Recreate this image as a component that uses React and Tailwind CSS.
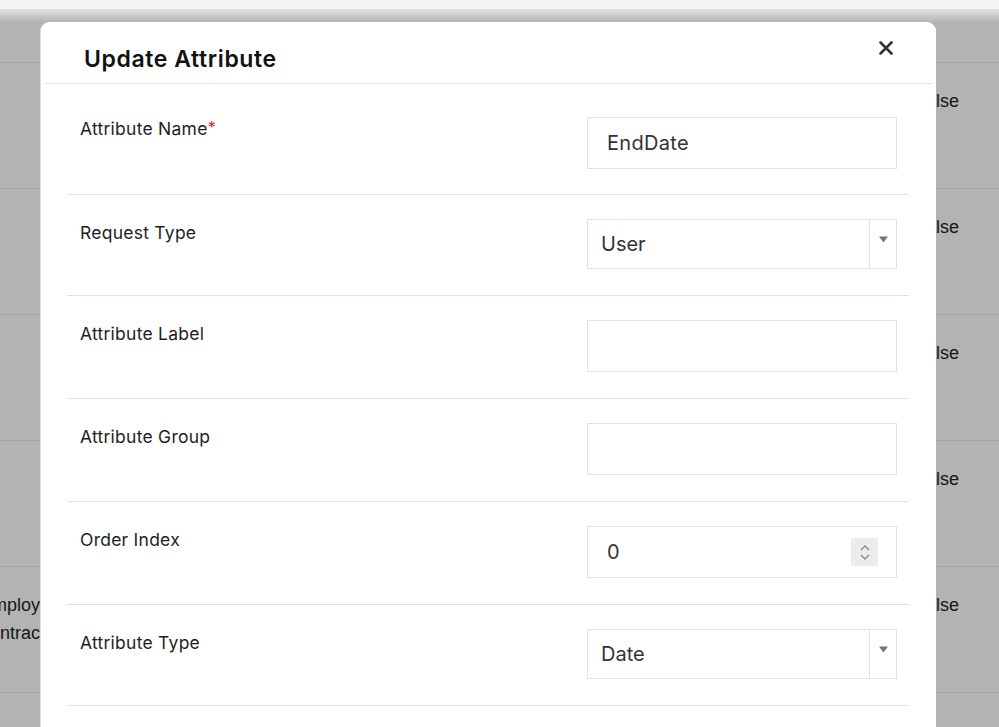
import React from "react";

const Chevron = () => (
  <svg width="9" height="7" viewBox="0 0 9 7" className="block">
    <path d="M0 0.5 L9 0.5 L4.5 6.5 Z" fill="#767676" />
  </svg>
);

const SelectBox = ({ value }) => (
  <div className="flex h-[50px] w-[310px] border border-[#e2e2e2] bg-white">
    <div className="flex flex-1 items-center pl-[13px] text-[20px] text-[#333] font-['Inter',sans-serif]">
      {value}
    </div>
    <div className="flex w-[27px] justify-center border-l border-[#e2e2e2] pt-[16px]">
      <Chevron />
    </div>
  </div>
);

const TextBox = ({ value }) => (
  <div className="flex h-[52px] w-[310px] items-center border border-[#e2e2e2] bg-white pl-[19px] text-[20px] tracking-[0.3px] text-[#333] font-['Inter',sans-serif]">
    {value}
  </div>
);

const NumberBox = ({ value }) => (
  <div className="flex h-[52px] w-[310px] items-center justify-between border border-[#e2e2e2] bg-white pl-[19px] pr-[18px] text-[20px] text-[#333] font-['Inter',sans-serif]">
    <span>{value}</span>
    <div className="flex h-[28px] w-[27px] flex-col items-center justify-center gap-[3px] bg-[#ececec]">
      <svg width="10" height="6" viewBox="0 0 10 6">
        <path d="M1 5 L5 1 L9 5" fill="none" stroke="#8a8a8a" strokeWidth="1.4" />
      </svg>
      <svg width="10" height="6" viewBox="0 0 10 6">
        <path d="M1 1 L5 5 L9 1" fill="none" stroke="#8a8a8a" strokeWidth="1.4" />
      </svg>
    </div>
  </div>
);

const Row = ({ label, required, first, children }) => (
  <div
    className={`flex items-start justify-between border-b border-[#dde1ef] pl-[13px] pr-[12px] ${
      first ? "pt-[33px] pb-[25px]" : "pt-[24px] pb-[26px]"
    }`}
  >
    <div
      className={`text-[17.5px] leading-[24px] tracking-[0.25px] text-[#1e1e1e] font-['Inter',sans-serif] ${
        first ? "" : "pt-[2px]"
      }`}
    >
      {label}
      {required && <span className="relative -top-[2px] text-[16px] text-[#e8202a]">*</span>}
    </div>
    {children}
  </div>
);

export default function App() {
  const bgRows = [0, 1, 2, 3, 4, 5];
  return (
    <div className="relative h-[727px] w-[999px] overflow-hidden bg-[#b3b3b3] font-['Liberation_Sans',Arial,sans-serif]">
      {/* background page under overlay */}
      <div className="h-[9px] bg-[#f4f4f4]" />
      <div className="h-[13px] bg-gradient-to-b from-[#e2e2e2] to-[#b4b4b4]" />
      <div className="h-[41px] border-b border-[#9ca3b6]" />
      {bgRows.map((i) => (
        <div key={i} className="flex h-[126px] border-b border-[#9ca3b6] pt-[24px] text-[18px] leading-[28px] text-[#161616]">
          <div className="-ml-[20px] w-[941px] shrink-0">
            {i === 4 && (
              <>
                <div>Employee,</div>
                <div className="-ml-[3px]">Contractor</div>
              </>
            )}
          </div>
          <div>{i < 5 ? "false" : ""}</div>
        </div>
      ))}

      {/* modal */}
      <div className="absolute left-[40px] top-[22px] h-[760px] w-[896px] rounded-t-[9px] border-l border-[#dcdcdc] bg-white">
        <div className="ml-[4px] mr-[4px] flex h-[62px] items-start justify-between border-b border-[#dfe3ea] pl-[39px] pr-[39px]">
          <div className="mt-[23px] text-[23px] font-semibold leading-[28px] tracking-[0.6px] text-[#111] font-['Inter',sans-serif]">
            Update Attribute
          </div>
          <svg width="14" height="14" viewBox="0 0 14 14" className="mt-[19px]">
            <path d="M1.5 1.5 L12.5 12.5 M12.5 1.5 L1.5 12.5" stroke="#333" strokeWidth="2.6" strokeLinecap="round" />
          </svg>
        </div>
        <div className="pl-[26px] pr-[27px]">
          <Row label="Attribute Name" required first>
            <TextBox value="EndDate" />
          </Row>
          <Row label="Request Type">
            <SelectBox value="User" />
          </Row>
          <Row label="Attribute Label">
            <TextBox value="" />
          </Row>
          <Row label="Attribute Group">
            <TextBox value="" />
          </Row>
          <Row label="Order Index">
            <NumberBox value="0" />
          </Row>
          <Row label="Attribute Type">
            <SelectBox value="Date" />
          </Row>
        </div>
      </div>
    </div>
  );
}
